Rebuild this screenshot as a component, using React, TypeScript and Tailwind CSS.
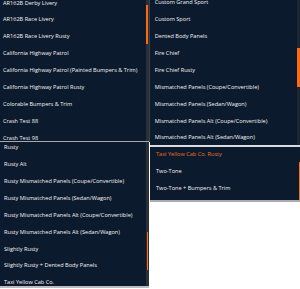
import React from "react";

const listA = [
  "AR162B Derby Livery",
  "AR162B Race Livery",
  "AR162B Race Livery Rusty",
  "California Highway Patrol",
  "California Highway Patrol (Painted Bumpers & Trim)",
  "California Highway Patrol Rusty",
  "Colorable Bumpers & Trim",
  "Crash Test 88",
  "Crash Test 98",
];

const listB = [
  "Custom Grand Sport",
  "Custom Sport",
  "Dented Body Panels",
  "Fire Chief",
  "Fire Chief Rusty",
  "Mismatched Panels (Coupe/Convertible)",
  "Mismatched Panels (Sedan/Wagon)",
  "Mismatched Panels Alt (Coupe/Convertible)",
  "Mismatched Panels Alt (Sedan/Wagon)",
];

const listC = [
  "Rusty",
  "Rusty Alt",
  "Rusty Mismatched Panels (Coupe/Convertible)",
  "Rusty Mismatched Panels (Sedan/Wagon)",
  "Rusty Mismatched Panels Alt (Coupe/Convertible)",
  "Rusty Mismatched Panels Alt (Sedan/Wagon)",
  "Slightly Rusty",
  "Slightly Rusty + Dented Body Panels",
  "Taxi Yellow Cab Co.",
];

const listD = [
  "Taxi Yellow Cab Co. Rusty",
  "Two-Tone",
  "Two-Tone + Bumpers & Trim",
];

function Row({ label, active }: { label: string; active?: boolean }) {
  return (
    <div
      className={
        active
          ? "h-[16.9px] flex items-center whitespace-nowrap text-[5.6px] leading-none text-[#e8731c]"
          : "h-[16.9px] flex items-center whitespace-nowrap text-[5.6px] leading-none text-[#f2f3f5]"
      }
    >
      {label}
    </div>
  );
}

export default function App() {
  return (
    <div
      className="w-[300px] h-[289px] bg-white flex overflow-hidden"
      style={{ fontFamily: '"Open Sans", "Noto Sans", sans-serif' }}
    >
      {/* Left column */}
      <div className="w-[149px] flex flex-col">
        {/* Top-left panel */}
        <div className="h-[141px] flex bg-[#0c1a2e] overflow-hidden">
          <div className="flex-1 overflow-hidden pl-[3px]">
            <div className="mt-[-5.15px]">
              {listA.map((t) => (
                <Row key={t} label={t} />
              ))}
            </div>
          </div>
          <div className="w-[3px] bg-[#2a2f38] flex flex-col">
            <div className="h-[5px]" />
            <div className="h-[39px] w-[1.5px] bg-[#ff6a0d]" />
          </div>
        </div>
        <div className="h-[1px] bg-[#a6a9ae]" />
        {/* Bottom-left panel */}
        <div className="h-[144px] flex bg-[#0c1a2e] overflow-hidden">
          <div className="flex-1 overflow-hidden pl-[4px]">
            <div className="mt-[-2.45px]">
              {listC.map((t) => (
                <Row key={t} label={t} />
              ))}
            </div>
          </div>
          <div className="w-[3px] bg-[#2a2f38] flex flex-col">
            <div className="h-[90px]" />
            <div className="h-[38px] w-[1.5px] ml-[0.5px] bg-[#ff6a0d]" />
          </div>
        </div>
        <div className="h-[2px] bg-[#b9bcc0]" />
      </div>

      <div className="w-[1px] bg-[#3a3f47] h-[142px]" />

      {/* Right column */}
      <div className="flex-1 flex flex-col">
        {/* Top-right panel */}
        <div className="h-[145px] flex bg-[#0c1a2e] overflow-hidden">
          <div className="flex-1 overflow-hidden pl-[4.7px]">
            <div className="mt-[-5.3px]">
              {listB.map((t) => (
                <Row key={t} label={t} />
              ))}
            </div>
          </div>
          <div className="w-[3px] bg-[#1d2530] flex flex-col">
            <div className="h-[48px]" />
            <div className="h-[39px] w-[3px] bg-[#ff6a0d]" />
          </div>
        </div>
        <div className="h-[2px] bg-[#d9dbde]" />
        {/* Bottom-right panel */}
        <div className="h-[53px] flex bg-[#0c1a2e] overflow-hidden">
          <div className="flex-1 overflow-hidden pl-[6px]">
            <div className="mt-[-0.45px]">
              {listD.map((t, i) => (
                <Row key={t} label={t} active={i === 0} />
              ))}
            </div>
          </div>
          <div className="w-[1px] flex flex-col">
            <div className="h-[15px]" />
            <div className="h-[38px] w-[1px] bg-[#e8731c]" />
          </div>
        </div>
        <div className="h-[2px] bg-[#a9acb1]" />
      </div>
    </div>
  );
}
